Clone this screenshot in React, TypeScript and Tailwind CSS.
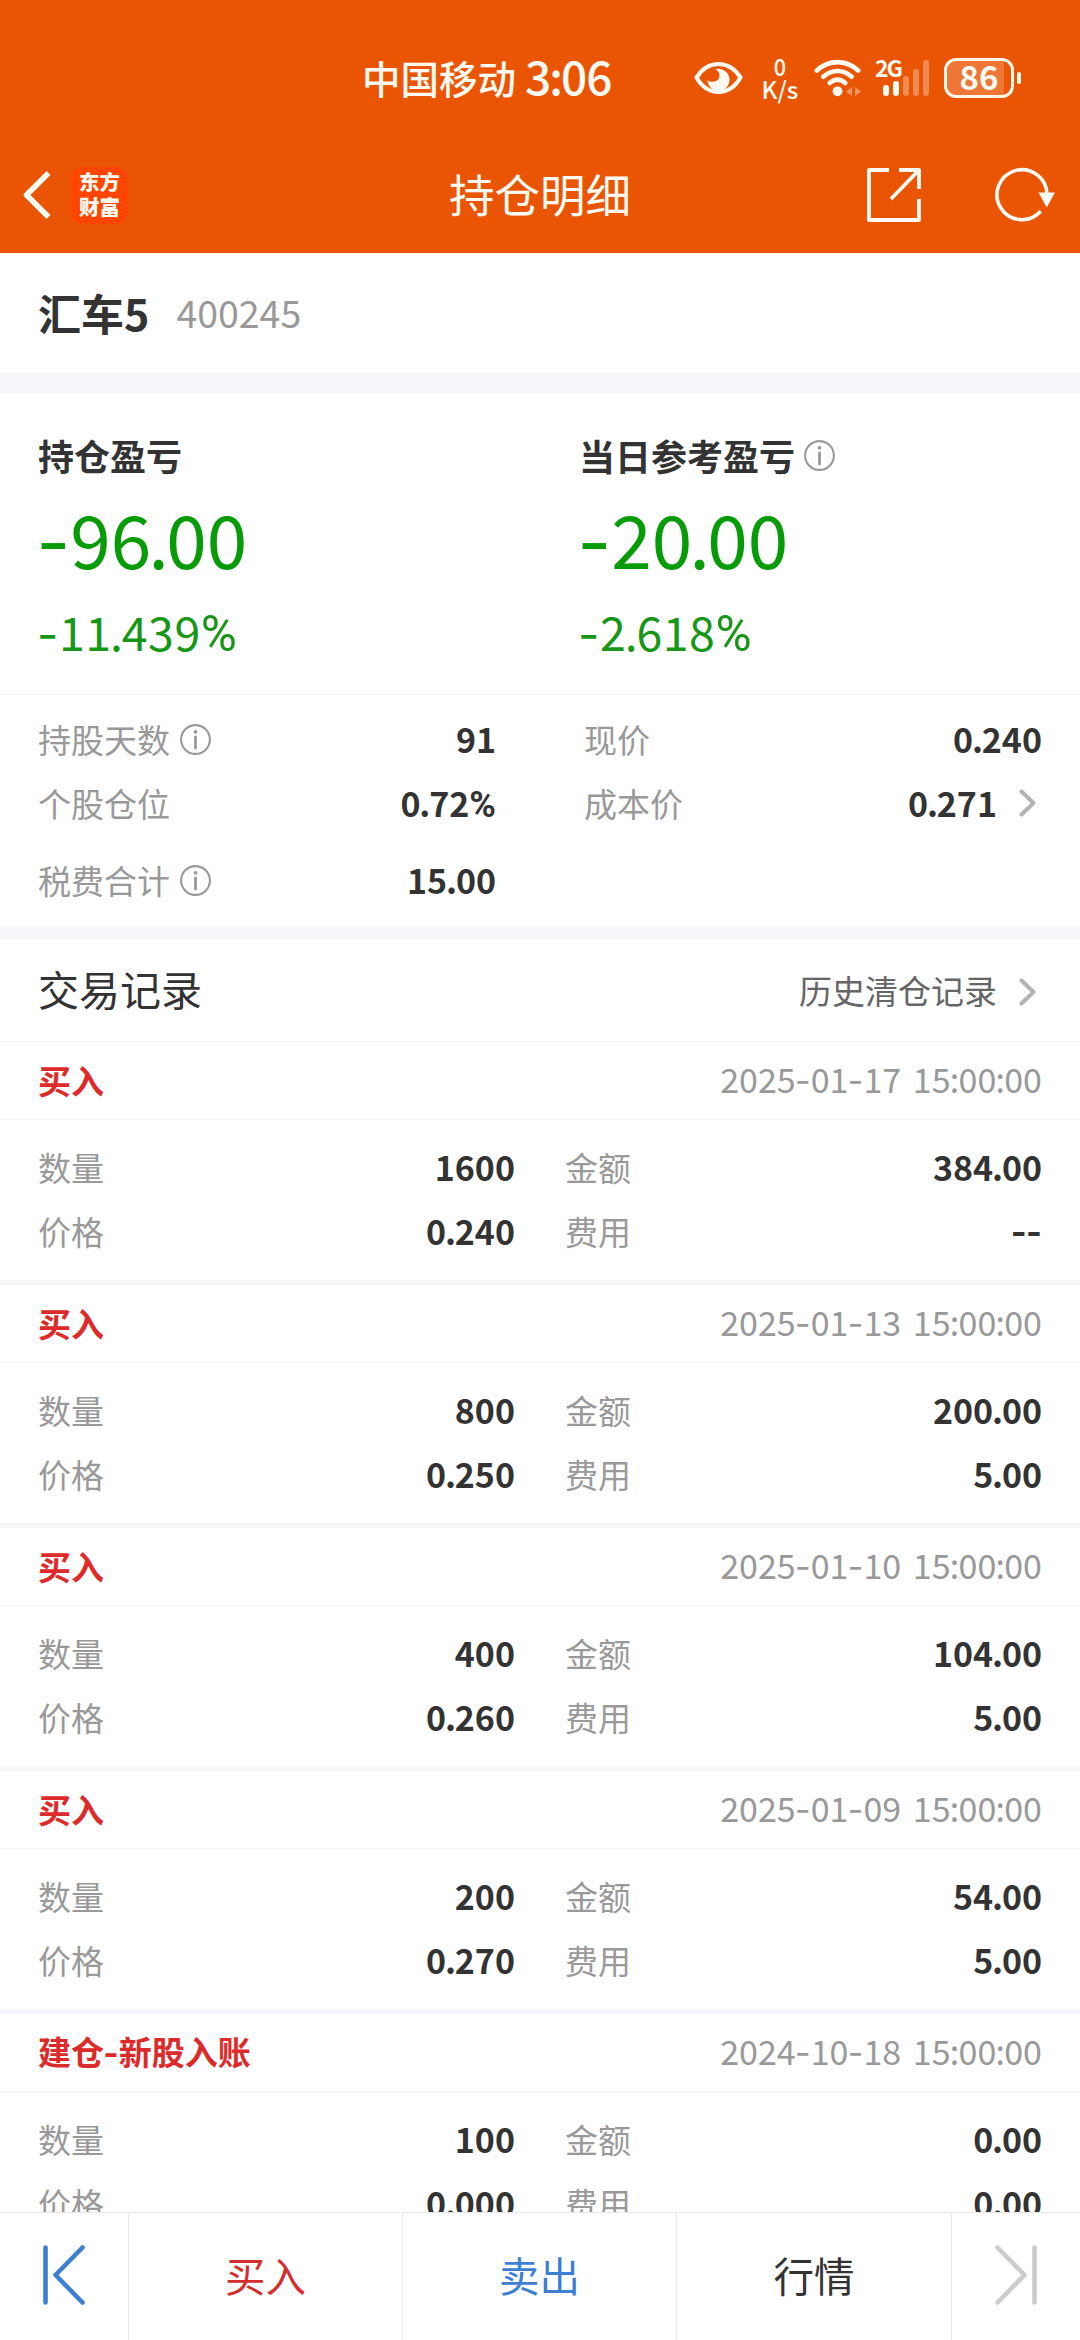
import type { ReactNode } from "react";
import clsx from "clsx";

interface TradeRecord {
  title: string;
  time: string;
  quantity: string;
  amount: string;
  price: string;
  fee: string;
}

const RECORDS: TradeRecord[] = [
  { title: "买入", time: "2025-01-17 15:00:00", quantity: "1600", amount: "384.00", price: "0.240", fee: "--" },
  { title: "买入", time: "2025-01-13 15:00:00", quantity: "800", amount: "200.00", price: "0.250", fee: "5.00" },
  { title: "买入", time: "2025-01-10 15:00:00", quantity: "400", amount: "104.00", price: "0.260", fee: "5.00" },
  { title: "买入", time: "2025-01-09 15:00:00", quantity: "200", amount: "54.00", price: "0.270", fee: "5.00" },
  { title: "建仓-新股入账", time: "2024-10-18 15:00:00", quantity: "100", amount: "0.00", price: "0.000", fee: "0.00" },
];

// punctuation inside figures is set a little tighter or wider than the text font has it
const PUNCTUATION: Record<string, string> = {
  "-": "font-['Inter'] -ml-[0.02em]",
  "%": "font-['Roboto'] text-[1.06em] leading-[0.5]",
  ".": "-mx-[0.035em]",
  ":": "-mx-[0.022em]",
};

function Figure({ children }: { children: string }) {
  return (
    <>
      {children.split(/([-%.:])/).map((part, i) =>
        part in PUNCTUATION ? (
          <span key={i} className={PUNCTUATION[part]}>
            {part}
          </span>
        ) : (
          part
        ),
      )}
    </>
  );
}

function InfoIcon() {
  return (
    <svg width="31" height="31" viewBox="0 0 31 31" fill="none" className="shrink-0 text-[#999]">
      <circle cx="15.5" cy="15.5" r="14.4" stroke="currentColor" strokeWidth="2.1" />
      <circle cx="15.5" cy="7.8" r="1.9" fill="currentColor" />
      <path d="M15.5 13v11" stroke="currentColor" strokeWidth="2.8" strokeLinecap="round" />
    </svg>
  );
}

function ChevronIcon() {
  return (
    <svg width="18" height="28" viewBox="0 0 18 28" fill="none" className="shrink-0">
      <path d="M2.5 2.5L14.5 14L2.5 25.5" stroke="#b3b3b3" strokeWidth="4" strokeLinecap="round" strokeLinejoin="round" />
    </svg>
  );
}

function StatusBar() {
  return (
    <div className="flex h-[140px] items-start pt-[56px]">
      <div className="ml-[362px] flex h-[42px] w-[332px] items-center font-medium">
        <span className="text-[38.5px] leading-none">中国移动</span>
        <span className="ml-[9px] pb-[4px] text-[46px] leading-none tracking-[-1px]">
          <Figure>3:06</Figure>
        </span>
      </div>
      <svg width="49" height="42" viewBox="0 0 49 42" fill="none">
        <path
          d="M2.5 21.5C8 13 16 8 24.5 8S41 13 46.5 21.5C41 31 33 36 24.5 36S8 31 2.5 21.5Z"
          stroke="currentColor"
          strokeWidth="4.2"
          strokeLinejoin="round"
        />
        <path d="M21.5 13.3A11 11 0 1 1 13.5 24c2.5 3.2 11.5 2.5 12-4 .2-3-1.5-5.500-4-6.700Z" fill="currentColor" />
      </svg>
      <div className="ml-[15px] flex h-[46px] w-[44px] flex-col items-center text-[24px] leading-[23px] font-medium">
        <span className="-mt-[2px] scale-x-90">0</span>
        <span>K/s</span>
      </div>
      <svg width="48" height="42" viewBox="0 0 48 42" fill="none" className="ml-[12px]">
        <g stroke="currentColor" strokeWidth="4.6" strokeLinecap="round">
          <path d="M2.8 14.5C15 3.3 32 3.3 44.2 14.5" />
          <path d="M9.3 20.8C18 13 29 13 37.7 20.8" />
          <path d="M15.7 27C21 22.5 26 22.5 31.3 27" />
        </g>
        <circle cx="23.5" cy="35.3" r="4.9" fill="currentColor" />
        <path d="M38 31v9l-6-4.5ZM41 31v9l6-4.5Z" fill="currentColor" opacity=".4" />
      </svg>
      <div className="ml-[13px] grid h-[42px] w-[56px]">
        <span className="col-start-1 row-start-1 text-[23px] leading-[22px] font-bold tracking-[-2px]">2G</span>
        <svg width="56" height="42" viewBox="0 0 56 42" fill="currentColor" className="col-start-1 row-start-1">
          <rect x="8" y="29" width="6" height="11" rx="3" />
          <rect x="18" y="25" width="6" height="15" rx="3" />
          <g opacity=".32">
            <rect x="28" y="20" width="6" height="20" rx="3" />
            <rect x="38" y="13" width="6" height="27" rx="3" />
            <rect x="48" y="4" width="6" height="36" rx="3" />
          </g>
        </svg>
      </div>
      <div className="mt-[2px] ml-[13px] flex items-center gap-[3px]">
        <div className="flex h-[40px] w-[70px] rounded-[12px] border-[3px] border-[#fff6ea]">
          <div className="flex w-[57px] items-center justify-center rounded-l-[9px] bg-white/20 pb-[3px] pl-[7px] text-[33px] leading-none font-bold">
            86
          </div>
        </div>
        <div className="h-[12px] w-[4px] rounded-full bg-[#fff6ea]" />
      </div>
    </div>
  );
}

function TitleBar() {
  return (
    <div className="flex h-[113px] items-center justify-between pr-[23px] pb-[3px] pl-[20px]">
      <div className="flex w-[428px] items-center gap-[20px]">
        <svg width="31" height="50" viewBox="0 0 31 50" fill="none">
          <path d="M26.5 5L6.5 25L26.5 45" stroke="currentColor" strokeWidth="5.6" strokeLinecap="square" strokeLinejoin="round" />
        </svg>
        <div className="flex h-[57px] w-[57px] flex-col items-center justify-center rounded-[12px] bg-[#ff4500] pb-[3px] text-[20.5px] leading-[24.5px] font-black">
          <span>东方</span>
          <span>财富</span>
        </div>
      </div>
      <h1 className="w-[416px] pb-[2px] text-[45.5px] leading-none">持仓明细</h1>
      <div className="flex gap-[73px]">
        <svg width="56" height="56" viewBox="0 0 56 56" fill="none" stroke="currentColor" strokeWidth="3.8" strokeLinejoin="round">
          <path d="M23 3H3v50h50V32" />
          <path d="M33 3h20v19M53 3L25 32" />
        </svg>
        <svg width="62" height="56" viewBox="0 0 62 56" fill="none">
          <path d="M45.7 44.3A25 25 0 1 1 52 28" stroke="currentColor" strokeWidth="3.6" />
          <path d="M43.5 25.5h16.500L51.7 40.5Z" fill="currentColor" />
        </svg>
      </div>
    </div>
  );
}

function Profit({ label, value, percent, info }: { label: string; value: string; percent: string; info?: boolean }) {
  return (
    <div className="flex flex-col">
      <div className="flex h-[48px] items-center gap-[9px]">
        <span className="text-[36px] leading-none font-bold text-[#333]">{label}</span>
        {info && <InfoIcon />}
      </div>
      <div className="mt-[20px] h-[76px] text-[73px] leading-[76px] text-[#079c07]">
        <Figure>{value}</Figure>
      </div>
      <div className="mt-[28px] h-[56px] text-[46.5px] leading-[56px] tracking-[0.5px] text-[#179617]">
        <Figure>{percent}</Figure>
      </div>
    </div>
  );
}

interface FieldProps {
  label: string;
  value: string;
  info?: boolean;
  link?: boolean;
  className?: string;
}

function Field({ label, value, info, link, className }: FieldProps) {
  return (
    <div className={clsx("flex h-[64px] items-center", className)}>
      <span className="text-[33px] leading-none text-[#999]">{label}</span>
      {info && (
        <span className="ml-[10px]">
          <InfoIcon />
        </span>
      )}
      <span className="ml-auto text-[34px] leading-none font-bold text-[#333]">
        <Figure>{value}</Figure>
      </span>
      {link && (
        <span className="mr-[5px] ml-[22px]">
          <ChevronIcon />
        </span>
      )}
    </div>
  );
}

function RecordCard({ record }: { record: TradeRecord }) {
  return (
    <div className="shrink-0 border-b-[5px] border-[#f5f7fa]">
      <div className="flex h-[78px] items-center justify-between border-b border-[#f5f5f5] px-[38px] pb-[1px]">
        <span className="text-[33px] leading-none font-bold text-[#dd2a2a]">
          <Figure>{record.title}</Figure>
        </span>
        <span className="text-[34px] leading-none [word-spacing:4px] text-[#999]">
          <Figure>{record.time}</Figure>
        </span>
      </div>
      <div className="grid grid-cols-[477px_477px] gap-x-[50px] pt-[15px] pb-[17px] pl-[38px]">
        <Field label="数量" value={record.quantity} />
        <Field label="金额" value={record.amount} />
        <Field label="价格" value={record.price} />
        <Field label="费用" value={record.fee} />
      </div>
    </div>
  );
}

function Tab({ className, children }: { className?: string; children: ReactNode }) {
  return (
    <div className={clsx("flex items-center justify-center border-l border-[#e8e8e8] text-[40.5px] leading-none", className)}>
      {children}
    </div>
  );
}

export default function App() {
  return (
    <div className="flex h-[2340px] w-[1080px] flex-col overflow-hidden bg-white font-['Noto_Sans_CJK_SC',sans-serif] whitespace-nowrap">
      <header className="shrink-0 bg-[#ea5504] text-[#fffaf2]">
        <StatusBar />
        <TitleBar />
      </header>

      <main className="flex min-h-0 flex-1 flex-col overflow-hidden">
        <div className="flex h-[120px] shrink-0 items-center px-[38px] pb-[2px]">
          <span className="text-[43px] leading-none font-bold text-[#333]">汇车5</span>
          <span className="ml-[27px] text-[37.5px] leading-none text-[#999]">400245</span>
        </div>

        <div className="h-[20px] shrink-0 bg-[#f5f7fa]" />

        <div className="grid h-[302px] shrink-0 grid-cols-[541px_1fr] border-b border-[#f5f5f5] pt-[38px] pl-[38px]">
          <Profit label="持仓盈亏" value="-96.00" percent="-11.439%" />
          <Profit label="当日参考盈亏" value="-20.00" percent="-2.618%" info />
        </div>

        <div className="grid shrink-0 grid-cols-[458px_458px] gap-x-[88px] pt-[12px] pb-[14px] pl-[38px]">
          <Field label="持股天数" value="91" info />
          <Field label="现价" value="0.240" />
          <Field label="个股仓位" value="0.72%" />
          <Field label="成本价" value="0.271" link />
          <Field label="税费合计" value="15.00" info className="mt-[13px]" />
        </div>

        <div className="h-[13px] shrink-0 bg-[#f5f7fa]" />

        <div className="flex h-[103px] shrink-0 items-center border-b border-[#f5f5f5] pr-[43px] pb-[3px] pl-[38px]">
          <h2 className="text-[41px] leading-none text-[#333]">交易记录</h2>
          <span className="mt-[4px] ml-auto text-[33px] leading-none text-[#666]">历史清仓记录</span>
          <span className="mt-[6px] ml-[22px]">
            <ChevronIcon />
          </span>
        </div>

        {RECORDS.map((record) => (
          <RecordCard key={record.time} record={record} />
        ))}
      </main>

      <footer className="grid h-[128px] shrink-0 grid-cols-[128px_274px_274px_275px_129px] border-t border-[#e8e8e8] bg-white">
        <div className="flex items-center justify-center pb-[4px]">
          <svg width="44" height="62" viewBox="0 0 44 62" fill="none" stroke="#3d7fd3" strokeWidth="4.6" strokeLinecap="round" strokeLinejoin="round">
            <path d="M3.5 3.5v55M40.5 3.5L13.5 31L40.5 58.5" />
          </svg>
        </div>
        <Tab className="pb-[2px] text-[#d42e2e]">买入</Tab>
        <Tab className="pb-[2px] text-[#3d7fd3]">卖出</Tab>
        <Tab className="pb-[2px] text-[#333]">行情</Tab>
        <Tab className="pb-[4px]">
          <svg width="44" height="62" viewBox="0 0 44 62" fill="none" stroke="#ccc" strokeWidth="4.6" strokeLinecap="round" strokeLinejoin="round">
            <path d="M40.5 3.5v55M3.5 3.5L30.5 31L3.5 58.5" />
          </svg>
        </Tab>
      </footer>
    </div>
  );
}
